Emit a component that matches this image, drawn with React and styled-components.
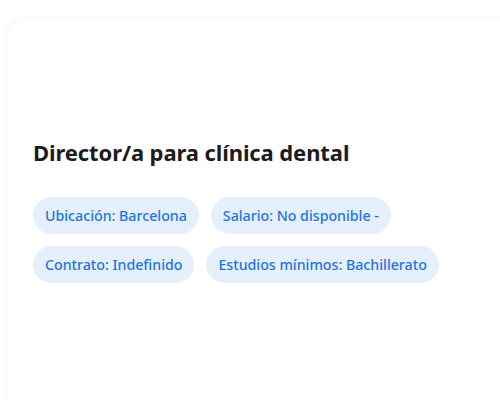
import React from 'react'
import styled, { createGlobalStyle } from 'styled-components'

const Global = createGlobalStyle`
  html, body {
    margin: 0;
    padding: 0;
    background: #ffffff;
    overflow: hidden;
  }
  body {
    font-family: "Noto Sans", "Open Sans", sans-serif;
  }
`

const Page = styled.div`
  width: 500px;
  height: 400px;
  padding: 20px 0 0 8px;
  box-sizing: border-box;
  overflow: hidden;
`

const Card = styled.article`
  width: 540px;
  height: 420px;
  box-sizing: border-box;
  background: #ffffff;
  border-radius: 16px;
  box-shadow: 0 0 10px rgba(0, 0, 0, 0.06);
  padding: 117px 25px 0;
`

const Title = styled.h2`
  margin: 0 0 30px;
  font-size: 22px;
  font-weight: 700;
  line-height: 30px;
  color: #1c1c1e;
  letter-spacing: -0.1px;
`

const Tags = styled.div`
  display: flex;
  flex-wrap: wrap;
  gap: 12px;
  max-width: 420px;
`

const Tag = styled.span`
  display: inline-flex;
  align-items: center;
  height: 37px;
  padding: 0 12px;
  border-radius: 999px;
  background: #e6f0fd;
  color: #1a73f0;
  font-size: 14.2px;
  font-weight: 500;
  white-space: nowrap;
`

const tags = [
  'Ubicación: Barcelona',
  'Salario: No disponible -',
  'Contrato: Indefinido',
  'Estudios mínimos: Bachillerato',
]

const App = () => (
  <Page>
    <Global />
    <Card>
      <Title>Director/a para clínica dental</Title>
      <Tags>
        {tags.map(t => <Tag key={t}>{t}</Tag>)}
      </Tags>
    </Card>
  </Page>
)

export default App
